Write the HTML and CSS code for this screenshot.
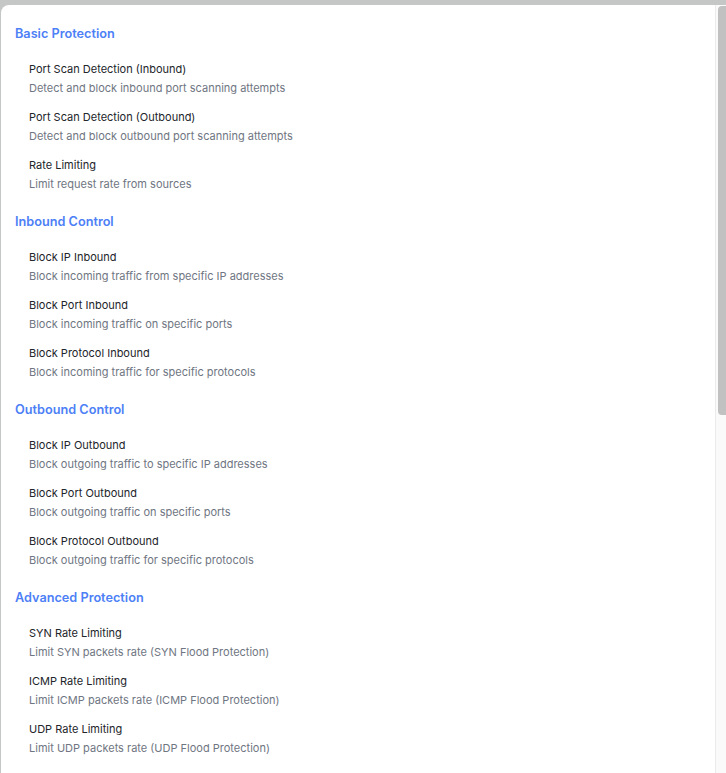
FILE: index.html
```html
<!DOCTYPE html>
<html lang="en">
<head>
<meta charset="utf-8">
<title>Protection Rules</title>
<link rel="stylesheet" href="styles.css">
</head>
<body>
<div class="panel">
  <div class="content">
    <section class="group">
      <h3 class="group-title">Basic Protection</h3>
      <div class="item"><div class="item-title">Port Scan Detection (Inbound)</div><div class="item-desc">Detect and block inbound port scanning attempts</div></div>
      <div class="item"><div class="item-title">Port Scan Detection (Outbound)</div><div class="item-desc">Detect and block outbound port scanning attempts</div></div>
      <div class="item"><div class="item-title">Rate Limiting</div><div class="item-desc">Limit request rate from sources</div></div>
    </section>
    <section class="group">
      <h3 class="group-title">Inbound Control</h3>
      <div class="item"><div class="item-title">Block IP Inbound</div><div class="item-desc">Block incoming traffic from specific IP addresses</div></div>
      <div class="item"><div class="item-title">Block Port Inbound</div><div class="item-desc">Block incoming traffic on specific ports</div></div>
      <div class="item"><div class="item-title">Block Protocol Inbound</div><div class="item-desc">Block incoming traffic for specific protocols</div></div>
    </section>
    <section class="group">
      <h3 class="group-title">Outbound Control</h3>
      <div class="item"><div class="item-title">Block IP Outbound</div><div class="item-desc">Block outgoing traffic to specific IP addresses</div></div>
      <div class="item"><div class="item-title">Block Port Outbound</div><div class="item-desc">Block outgoing traffic on specific ports</div></div>
      <div class="item"><div class="item-title">Block Protocol Outbound</div><div class="item-desc">Block outgoing traffic for specific protocols</div></div>
    </section>
    <section class="group">
      <h3 class="group-title">Advanced Protection</h3>
      <div class="item"><div class="item-title">SYN Rate Limiting</div><div class="item-desc">Limit SYN packets rate (SYN Flood Protection)</div></div>
      <div class="item"><div class="item-title">ICMP Rate Limiting</div><div class="item-desc">Limit ICMP packets rate (ICMP Flood Protection)</div></div>
      <div class="item"><div class="item-title">UDP Rate Limiting</div><div class="item-desc">Limit UDP packets rate (UDP Flood Protection)</div></div>
    </section>
  </div>
  <div class="scrollbar" aria-hidden="true"><div class="scroll-thumb"></div></div>
</div>
</body>
</html>
```

FILE: styles.css
```css
html, body {
  margin: 0;
  padding: 0;
  height: 100%;
  overflow: hidden;
}
body {
  background: #c5c6c6;
  font-family: Inter, "Noto Sans", "Liberation Sans", sans-serif;
}
.panel {
  display: flex;
  margin: 5px 0 0 1px;
  height: 768px;
  background: #ffffff;
  border-top-left-radius: 8px;
  overflow: hidden;
}
.content {
  flex: 1;
  min-width: 0;
  padding: 18px 14px 0;
}
.scrollbar {
  width: 8px;
  flex: none;
  background: #fafafa;
  border-left: 1px solid #ebebeb;
  padding: 1px 0 0 2px;
}
.scroll-thumb {
  height: 409px;
  background: #c1c1c1;
  border-radius: 4px 0 0 4px;
}
.group {
  margin-bottom: 13px;
}
.group-title {
  margin: 0 0 10px;
  padding-top: 1px;
  font-size: 12.7px;
  line-height: 20px;
  font-weight: 600;
  color: #4d7ff6;
}
.item {
  padding: 6px 14px 5px;
}
.item-title {
  font-size: 11px;
  line-height: 18px;
  color: #22252a;
  margin-bottom: 1px;
}
.item-desc {
  font-size: 11px;
  line-height: 18px;
  color: #6f7682;
}
```
